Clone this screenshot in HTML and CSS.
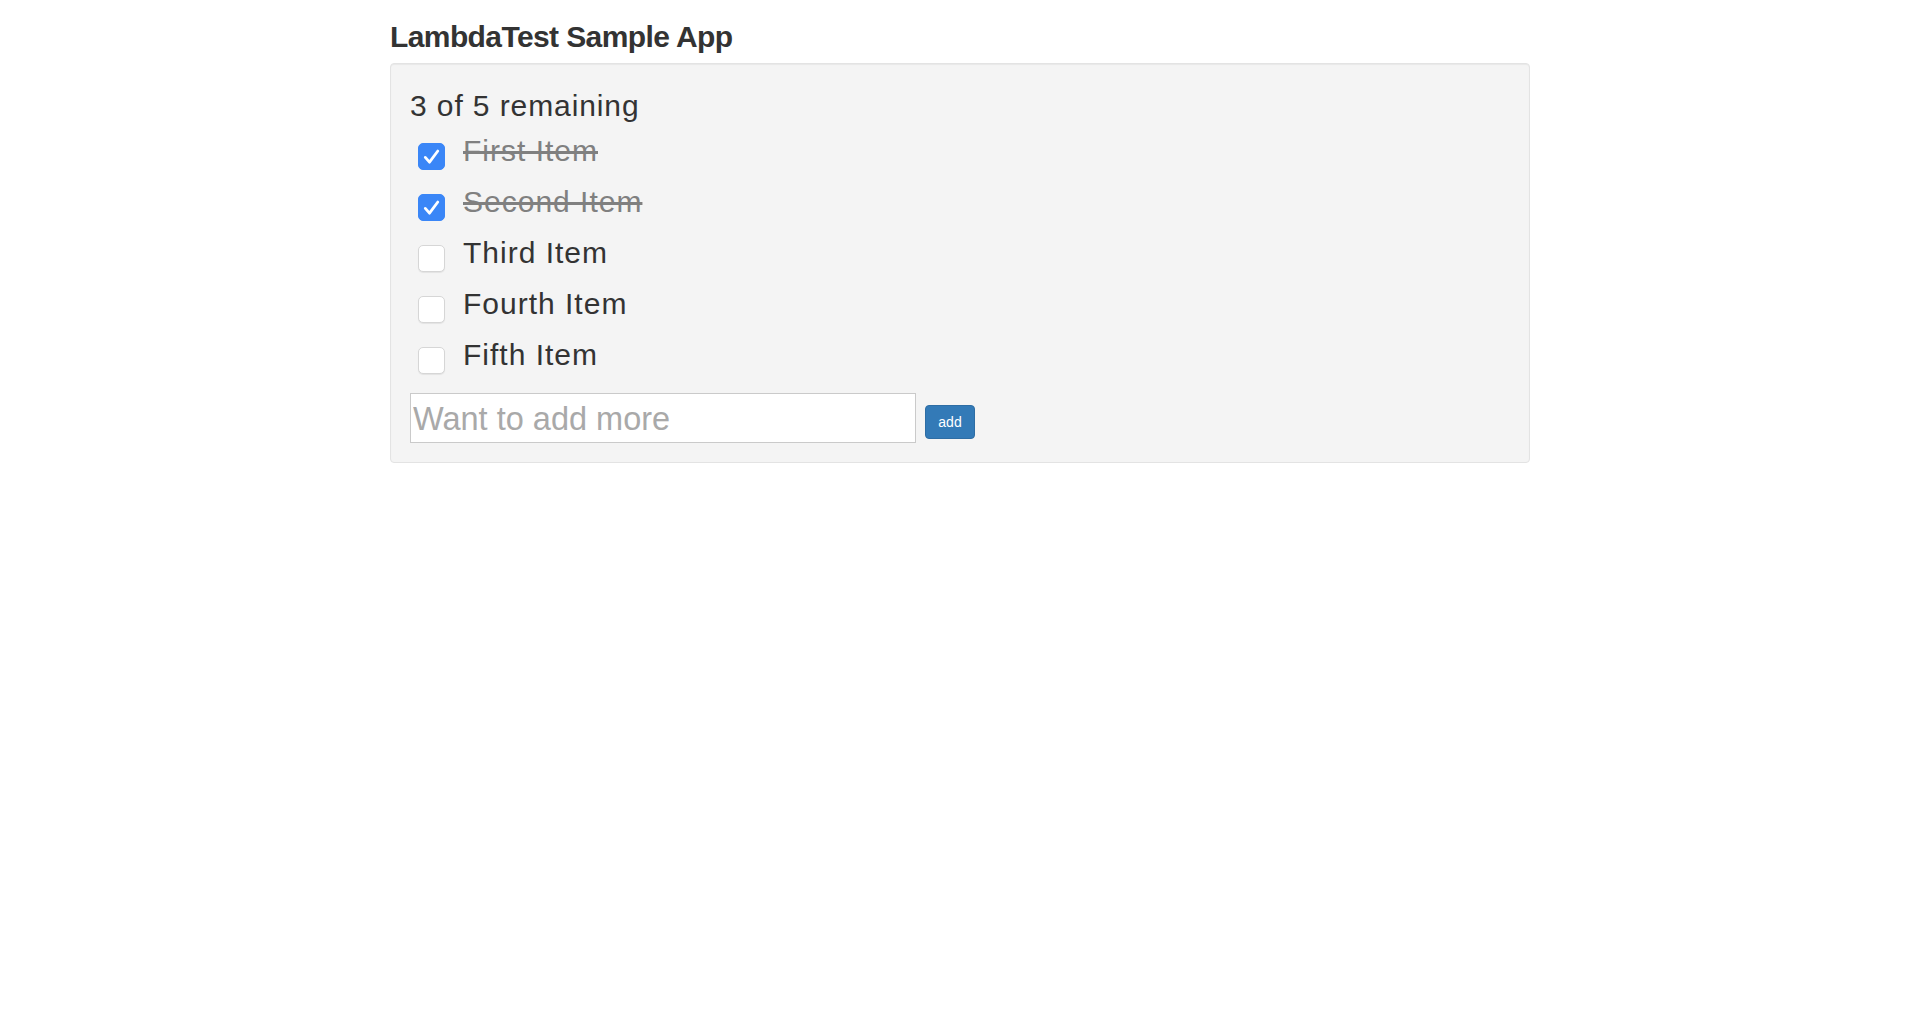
FILE: index.html
```html
<!DOCTYPE html>
<html>
<head>
<meta charset="utf-8">
<title>LambdaTest Sample App</title>
<link rel="stylesheet" href="styles.css">
</head>
<body>
<div class="container">
  <h2 class="title">LambdaTest Sample App</h2>
  <div class="well">
    <span class="remaining">3 of 5 remaining</span>
    <ul class="todo-list">
      <li class="todo">
        <span class="box box-checked"><svg width="27" height="27" viewBox="0 0 27 27"><path d="M7.3 14.4 L11.5 19.2 L19.8 8" fill="none" stroke="#fff" stroke-width="2.8" stroke-linecap="round" stroke-linejoin="round"/></svg></span>
        <span class="label done">First Item</span>
      </li>
      <li class="todo">
        <span class="box box-checked"><svg width="27" height="27" viewBox="0 0 27 27"><path d="M7.3 14.4 L11.5 19.2 L19.8 8" fill="none" stroke="#fff" stroke-width="2.8" stroke-linecap="round" stroke-linejoin="round"/></svg></span>
        <span class="label done">Second Item</span>
      </li>
      <li class="todo">
        <span class="box"></span>
        <span class="label">Third Item</span>
      </li>
      <li class="todo">
        <span class="box"></span>
        <span class="label">Fourth Item</span>
      </li>
      <li class="todo">
        <span class="box"></span>
        <span class="label">Fifth Item</span>
      </li>
    </ul>
    <form class="add-form">
      <input class="add-input" type="text" placeholder="Want to add more">
      <button class="add-btn" type="button">add</button>
    </form>
  </div>
</div>
</body>
</html>
```
FILE: styles.css
```css
html, body {
  margin: 0;
  padding: 0;
  background: #fff;
}
body {
  font-family: "Liberation Sans", Arial, Helvetica, sans-serif;
  color: #333;
}
.container {
  width: 1170px;
  margin: 0 auto;
  padding: 0 15px;
  box-sizing: border-box;
}
.title {
  margin: 20px 0 10px;
  font-size: 30px;
  line-height: 33px;
  font-weight: bold;
  letter-spacing: -0.6px;
  color: #333;
}
.well {
  padding: 19px;
  background: #f4f4f4;
  border: 1px solid #e3e3e3;
  border-radius: 4px;
  box-shadow: inset 0 1px 1px rgba(0,0,0,.05);
}
.remaining {
  display: block;
  font-size: 30px;
  line-height: 43px;
  letter-spacing: 0.9px;
  padding-top: 1px;
  margin-bottom: -1px;
}
.todo-list {
  list-style: none;
  margin: 0 0 12px;
  padding: 0;
}
.todo {
  display: flex;
  align-items: flex-start;
  height: 51px;
}
.box {
  flex-shrink: 0;
  width: 27px;
  height: 27px;
  margin: 17px 18px 0 8px;
  box-sizing: border-box;
  border-radius: 5px;
  background: #fff;
  border: 1px solid #d6d6d6;
  box-shadow: 0 1px 1px rgba(0,0,0,.07);
}
.box svg {
  display: block;
  margin: -1px;
}
.box-checked {
  background: #3a86f7;
  border-color: #3a86f7;
  box-shadow: none;
}
.label {
  font-size: 30px;
  line-height: 49px;
  letter-spacing: 1px;
}
.done {
  color: #808080;
  text-decoration: line-through;
}
.add-form {
  display: flex;
  align-items: flex-start;
  margin: 0;
}
.add-input {
  width: 506px;
  height: 50px;
  box-sizing: border-box;
  margin: 0;
  padding: 2px 2px 0;
  border: 1px solid #cacaca;
  border-radius: 0;
  background: #fff;
  font-family: "Liberation Sans", Arial, Helvetica, sans-serif;
  font-size: 32.5px;
  color: #333;
  outline: none;
}
.add-input::placeholder {
  color: #a9a9a9;
}
.add-btn {
  width: 50px;
  height: 34px;
  margin: 12px 0 0 9px;
  padding: 0;
  box-sizing: border-box;
  background: #337ab7;
  border: 1px solid #2e6da4;
  border-radius: 4px;
  color: #fff;
  font-family: "Liberation Sans", Arial, Helvetica, sans-serif;
  font-size: 14px;
  line-height: 32px;
}
```
